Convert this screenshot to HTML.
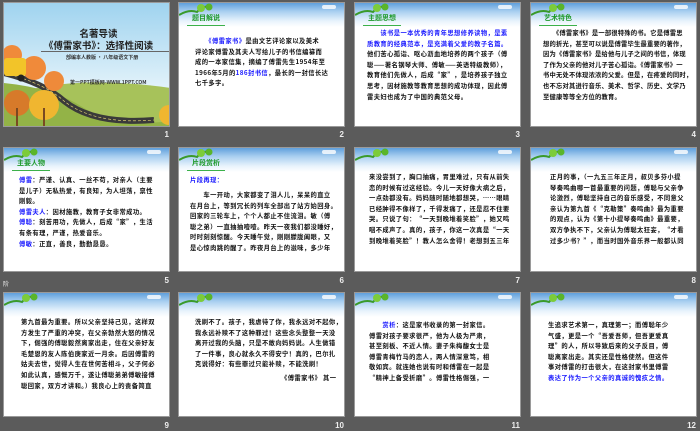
<!DOCTYPE html>
<html><head><meta charset="utf-8"><style>
*{margin:0;padding:0;box-sizing:border-box}
body{width:700px;height:431px;background:#5b5b5b;position:relative;overflow:hidden;font-family:"Liberation Sans","Noto Sans CJK SC",sans-serif}
.s{position:absolute;width:167px;height:125px;background:#fff;overflow:hidden;border:1px solid #9a9a9a}
.hd{position:absolute;left:0;top:0;width:100%;height:24px;background:linear-gradient(#5f9fdc,#a9cff0 35%,#e8f3fc 75%,#fff)}
.cl{position:absolute;top:2px;right:8px;width:14px;height:4px;background:#fff;border-radius:3px;opacity:.8}
.vine{position:absolute;left:0;top:0}
.tt{position:absolute;left:13px;top:10px;font-size:7px;font-weight:bold;color:#1e9a2a;font-family:"Noto Sans CJK SC",sans-serif}
.ul{position:absolute;left:8px;top:22px;width:38px;height:1px;background:#3cb14a}
.tx{position:absolute;left:14px;font-size:6.3px;line-height:10.6px;font-weight:bold;color:#111;font-family:"Noto Sans CJK SC",sans-serif;white-space:nowrap;letter-spacing:.4px}
.b{color:#1a1aff}
.n{position:absolute;color:#eee;font-size:8px;font-weight:bold;text-align:right;width:30px}
</style></head><body>

<div class="s" style="left:3px;top:2px;background:linear-gradient(#9fd3ef,#e8f5fb 75%)">
<svg width="167" height="125" style="position:absolute;left:0;top:0">
<path d="M0 95 Q60 70 167 85 L167 125 L0 125Z" fill="#a7c25a"/>
<path d="M0 80 Q50 85 80 105 Q110 125 167 118 L167 125 L0 125Z" fill="#93b347"/>
<path d="M0 70 Q40 80 60 98 Q90 122 150 117" stroke="#3a3a3a" stroke-width="6" fill="none"/>
<path d="M0 70 Q40 80 60 98 Q90 122 150 117" stroke="#f3e07a" stroke-width=".6" stroke-dasharray="3 2" fill="none"/>
<circle cx="8" cy="52" r="10" fill="#f08a3a"/><circle cx="30" cy="65" r="12" fill="#f08a3a"/><circle cx="50" cy="78" r="10" fill="#ee8a3a"/>
<rect x="0" y="55" width="22" height="18" rx="3" fill="#f2c429"/><circle cx="17" cy="75" r="3.5" fill="#222"/>
<circle cx="13" cy="100" r="13" fill="#d77a2a"/><circle cx="40" cy="102" r="15" fill="#f0b630"/>
<rect x="39" y="105" width="2" height="20" fill="#7a4a22"/><rect x="12" y="105" width="2" height="20" fill="#7a4a22"/>
<circle cx="165" cy="112" r="10" fill="#f0b630"/>
</svg>
<div style="position:absolute;left:0;width:167px;top:24px;text-align:center;font-size:9.5px;font-weight:bold;color:#222;font-family:'Noto Sans CJK SC',sans-serif;line-height:12px;padding-left:22px">名著导读<br>《傅雷家书》：选择性阅读</div>
<div style="position:absolute;left:37px;top:48px;width:128px;height:1px;background:#666"></div>
<div style="position:absolute;left:62px;top:51px;font-size:5px;font-weight:bold;color:#333;font-family:'Noto Sans CJK SC',sans-serif">部编本人教版 · 八年级语文下册</div>
<div style="position:absolute;left:66px;top:76px;font-size:5px;font-weight:bold;color:#333;font-family:'Noto Sans CJK SC',sans-serif">第一PPT模板网-WWW.1PPT.COM</div>
</div>
<div class="n" style="left:139px;top:130px">1</div>

<div class="s" style="left:178px;top:2px"><div class="hd"></div><div class="cl"></div>
<svg class="vine" width="40" height="14"><path d="M0 12 Q10 6 18 9 Q24 2 32 4" stroke="#3a9a2a" stroke-width="2" fill="none"/><circle cx="22" cy="5" r="4" fill="#7ccc3a"/><circle cx="30" cy="4" r="3.5" fill="#5ab52a"/></svg>
<div class="tt">题目解说</div><div class="ul"></div>
<div class="tx" style="top:33px;left:16px">　　<span class="b">《傅雷家书》</span>是由文艺评论家以及美术<br>评论家傅雷及其夫人写给儿子的书信编纂而<br>成的一本家信集，摘编了傅雷先生1954年至<br>1966年5月的<span class="b">186封书信</span>，最长的一封信长达<br>七千多字。</div></div>
<div class="n" style="left:314px;top:130px">2</div>

<div class="s" style="left:354px;top:2px"><div class="hd"></div><div class="cl"></div>
<svg class="vine" width="40" height="14"><path d="M0 12 Q10 6 18 9 Q24 2 32 4" stroke="#3a9a2a" stroke-width="2" fill="none"/><circle cx="22" cy="5" r="4" fill="#7ccc3a"/><circle cx="30" cy="4" r="3.5" fill="#5ab52a"/></svg>
<div class="tt">主题思想</div><div class="ul"></div>
<div class="tx" style="top:25px;left:12px"><span class="b">　　该书是一本优秀的青年思想修养读物，是素<br>质教育的经典范本，是充满着父爱的教子名篇。</span><br>他们苦心孤诣、呕心沥血地培养的两个孩子（傅<br>聪——著名钢琴大师、傅敏——英语特级教师），<br>教育他们先做人，后成“家”，是培养孩子独立<br>思考，因材施教等教育思想的成功体现，因此傅<br>雷夫妇也成为了中国的典范父母。</div></div>
<div class="n" style="left:490px;top:130px">3</div>

<div class="s" style="left:530px;top:2px"><div class="hd"></div><div class="cl"></div>
<svg class="vine" width="40" height="14"><path d="M0 12 Q10 6 18 9 Q24 2 32 4" stroke="#3a9a2a" stroke-width="2" fill="none"/><circle cx="22" cy="5" r="4" fill="#7ccc3a"/><circle cx="30" cy="4" r="3.5" fill="#5ab52a"/></svg>
<div class="tt">艺术特色</div><div class="ul"></div>
<div class="tx" style="top:25px;left:12px;letter-spacing:.2px">　　《傅雷家书》是一部很特殊的书。它是傅雷思<br>想的折光，甚至可以说是傅雷毕生最重要的著作，<br>因为《傅雷家书》是给他与儿子之间的书信，体现<br>了作为父亲的他对儿子苦心孤诣。《傅雷家书》一<br>书中无处不体现浓浓的父爱。但是，在疼爱的同时，<br>也不忘对其进行音乐、美术、哲学、历史、文学乃<br>至健康等等全方位的教育。</div></div>
<div class="n" style="left:666px;top:130px">4</div>

<div class="s" style="left:3px;top:147px"><div class="hd"></div><div class="cl"></div>
<svg class="vine" width="40" height="14"><path d="M0 12 Q10 6 18 9 Q24 2 32 4" stroke="#3a9a2a" stroke-width="2" fill="none"/><circle cx="22" cy="5" r="4" fill="#7ccc3a"/><circle cx="30" cy="4" r="3.5" fill="#5ab52a"/></svg>
<div class="tt">主要人物</div><div class="ul"></div>
<div class="tx" style="top:27px;left:15px"><span class="b">傅雷</span>：严谨、认真、一丝不苟，对亲人（主要<br>是儿子）无私热爱，有良知，为人坦荡，禀性<br>刚毅。<br><span class="b">傅雷夫人</span>：因材施教，教育子女非常成功。<br><span class="b">傅聪</span>：刻苦用功，先做人，后成“家”，生活<br>有条有理，严谨，热爱音乐。<br><span class="b">傅敏</span>：正直，善良，勤勤恳恳。</div></div>
<div class="n" style="left:139px;top:276px">5</div>
<div style="position:absolute;left:3px;top:279px;color:#eee;font-size:6px">阶</div>

<div class="s" style="left:178px;top:147px"><div class="hd"></div><div class="cl"></div>
<svg class="vine" width="40" height="14"><path d="M0 12 Q10 6 18 9 Q24 2 32 4" stroke="#3a9a2a" stroke-width="2" fill="none"/><circle cx="22" cy="5" r="4" fill="#7ccc3a"/><circle cx="30" cy="4" r="3.5" fill="#5ab52a"/></svg>
<div class="tt">片段赏析</div><div class="ul"></div>
<div class="tx" style="top:27px;left:11px"><span class="b">片段再现：</span></div>
<div class="tx" style="top:42px;left:11px">　　车一开动，大家都变了泪人儿，呆呆的直立<br>在月台上，等到冗长的列车全部出了站方始回身。<br>回家的三轮车上，个个人都止不住流泪。敏（傅<br>聪之弟）一直抽抽噎噎。昨天一夜我们都没睡好，<br>时时刻刻惊醒。今天睡午觉，刚刚朦胧阖眼，又<br>是心惊肉跳的醒了。昨夜月台上的滋味，多少年</div></div>
<div class="n" style="left:314px;top:276px">6</div>

<div class="s" style="left:354px;top:147px"><div class="hd"></div><div class="cl"></div>
<svg class="vine" width="40" height="14"><path d="M0 12 Q10 6 18 9 Q24 2 32 4" stroke="#3a9a2a" stroke-width="2" fill="none"/><circle cx="22" cy="5" r="4" fill="#7ccc3a"/><circle cx="30" cy="4" r="3.5" fill="#5ab52a"/></svg>
<div class="tx" style="top:24px;left:14px">来没尝到了，胸口抽痛，胃里难过，只有从前失<br>恋的时候有过这经验。今儿一天好像大病之后，<br>一点劲都没有。妈妈随时随地都想哭，……眼睛<br>已经肿得不像样了，千得发痛了，还是忍不住要<br>哭。只说了句：“一天到晚堆着笑脸”，她又鸣<br>咽不成声了。真的，孩子，你这一次真是“一天<br>到晚堆着笑脸”！教人怎么舍得！老想到五三年</div></div>
<div class="n" style="left:490px;top:276px">7</div>

<div class="s" style="left:530px;top:147px"><div class="hd"></div><div class="cl"></div>
<svg class="vine" width="40" height="14"><path d="M0 12 Q10 6 18 9 Q24 2 32 4" stroke="#3a9a2a" stroke-width="2" fill="none"/><circle cx="22" cy="5" r="4" fill="#7ccc3a"/><circle cx="30" cy="4" r="3.5" fill="#5ab52a"/></svg>
<div class="tx" style="top:24px;left:19px">正月的事，（一九五三年正月，叔贝多芬小提<br>琴奏鸣曲哪一首最重要的问题，傅聪与父亲争<br>论激烈，傅聪坚持自己的音乐感受，不同意父<br>亲认为第九首《“克勒策”奏鸣曲》最为重要<br>的观点，认为《第十小提琴奏鸣曲》最重要，<br>双方争执不下，父亲认为傅聪太狂妄，“才看<br>过多少书？”，而当时国外音乐界一般都认同</div></div>
<div class="n" style="left:666px;top:276px">8</div>

<div class="s" style="left:3px;top:292px"><div class="hd"></div><div class="cl"></div>
<svg class="vine" width="40" height="14"><path d="M0 12 Q10 6 18 9 Q24 2 32 4" stroke="#3a9a2a" stroke-width="2" fill="none"/><circle cx="22" cy="5" r="4" fill="#7ccc3a"/><circle cx="30" cy="4" r="3.5" fill="#5ab52a"/></svg>
<div class="tx" style="top:24px;left:17px">第九首最为重要。所以父亲坚持己见，这样双<br>方发生了严重的冲突，在父亲勃然大怒的情况<br>下，倔强的傅聪毅然离家出走，住在父亲好友<br>毛楚恩的友人陈伯庚家近一月余。后因傅雷的<br>姑夫去世，觉得人生在世何苦相斗，父子何必<br>如此认真，感慨万千，遂让傅聪弟弟傅敏接傅<br>聪回家，双方才讲和。）我良心上的责备简直</div></div>
<div class="n" style="left:139px;top:421px">9</div>

<div class="s" style="left:178px;top:292px"><div class="hd"></div><div class="cl"></div>
<svg class="vine" width="40" height="14"><path d="M0 12 Q10 6 18 9 Q24 2 32 4" stroke="#3a9a2a" stroke-width="2" fill="none"/><circle cx="22" cy="5" r="4" fill="#7ccc3a"/><circle cx="30" cy="4" r="3.5" fill="#5ab52a"/></svg>
<div class="tx" style="top:24px;left:16px">洗刷不了。孩子，我虐待了你，我永远对不起你，<br>我永远补赎不了这种罪过！这些念头整整一天没<br>离开过我的头脑，只是不敢向妈妈说。人生做错<br>了一件事，良心就永久不得安宁！真的，巴尔扎<br>克说得好：有些罪过只能补赎，不能洗刷！</div>
<div class="tx" style="top:80px;left:102px">《傅雷家书》 其一</div></div>
<div class="n" style="left:314px;top:421px">10</div>

<div class="s" style="left:354px;top:292px"><div class="hd"></div><div class="cl"></div>
<svg class="vine" width="40" height="14"><path d="M0 12 Q10 6 18 9 Q24 2 32 4" stroke="#3a9a2a" stroke-width="2" fill="none"/><circle cx="22" cy="5" r="4" fill="#7ccc3a"/><circle cx="30" cy="4" r="3.5" fill="#5ab52a"/></svg>
<div class="tx" style="top:27px;left:14px">　　<span class="b">赏析</span>：这是家书收录的第一封家信。<br>傅雷对孩子要求很严，他为人极为严肃，<br>甚至刻板、不近人情。妻子朱梅馥女士是<br>傅雷青梅竹马的恋人，两人情深意笃，相<br>敬如宾。就连她也说有时和傅雷在一起是<br>“精神上备受折磨”。傅雷性格倔强，一</div></div>
<div class="n" style="left:490px;top:421px">11</div>

<div class="s" style="left:530px;top:292px"><div class="hd"></div><div class="cl"></div>
<svg class="vine" width="40" height="14"><path d="M0 12 Q10 6 18 9 Q24 2 32 4" stroke="#3a9a2a" stroke-width="2" fill="none"/><circle cx="22" cy="5" r="4" fill="#7ccc3a"/><circle cx="30" cy="4" r="3.5" fill="#5ab52a"/></svg>
<div class="tx" style="top:27px;left:17px">生追求艺术第一，真理第一；而傅聪年少<br>气盛，更是一个“吾爱吾师，但吾更爱真<br>理”的人，所以导致后来的父子反目，傅<br>聪离家出走。其实还是性格使然。但这件<br>事对傅雷的打击很大，在这封家书里傅雷<br><span class="b">表达了作为一个父亲的真诚的愧疚之情。</span></div></div>
<div class="n" style="left:666px;top:421px">12</div>

</body></html>
